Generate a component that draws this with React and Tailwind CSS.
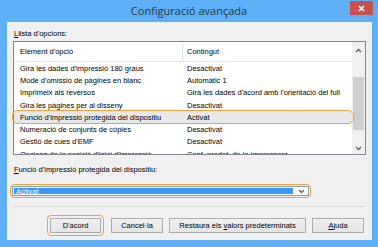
import React from 'react';

const rows = [
  ["Gira les dades d'impressió 180 graus", 'Desactivat'],
  ["Mode d'omissió de pàgines en blanc", 'Automàtic 1'],
  ['Imprimeix als reversos', "Gira les dades d'acord amb l'orientació del full"],
  ['Gira les pàgines per al disseny', 'Desactivat'],
  ["Funció d'impressió protegida del dispositiu", 'Activat', true],
  ['Numeració de conjunts de còpies', 'Desactivat'],
  ["Gestió de cues d'EMF", 'Desactivat'],
  ["Opcions de la posició d'inici d'impressió", 'Conf. predet. de la impressora'],
];

function Chevron({ up }) {
  return (
    <svg width="7" height="5" viewBox="0 0 7 5">
      <path d={up ? 'M1 4 L3.5 1.5 L6 4' : 'M1 1 L3.5 3.5 L6 1'} fill="none" stroke="#606060" strokeWidth="1.3" />
    </svg>
  );
}

function Button({ children, className = '' }) {
  return (
    <div className={`h-[15px] border border-[#acacac] bg-gradient-to-b from-[#f0f0f0] to-[#e5e5e5] flex items-center justify-center text-[7.5px] ${className}`}>
      <span>{children}</span>
    </div>
  );
}

export default function App() {
  return (
    <div className="w-[378px] h-[247px] bg-[#5db0f6] flex flex-col text-black" style={{ fontFamily: '"Liberation Sans", Arial, sans-serif' }}>
      {/* Title bar */}
      <div className="h-[22px] grid grid-cols-[1fr_auto_1fr] items-start">
        <div />
        <div className="pt-[4px] text-[11px] leading-[14px] text-[#2a3440]" style={{ fontFamily: '"Open Sans", sans-serif' }}>Configuració avançada</div>
        <div className="flex justify-end pr-[5px] pt-[1px]">
          <div className="w-[23px] h-[14px] bg-[#c75050] flex items-center justify-center">
            <svg width="7" height="7" viewBox="0 0 7 7">
              <path d="M1 1 L6 6 M6 1 L1 6" stroke="#fff" strokeWidth="1.6" />
            </svg>
          </div>
        </div>
      </div>

      {/* Client area */}
      <div className="mx-[7px] mr-[6px] h-[218px] bg-[#f0f0f0] flex flex-col px-[6px] text-[7.5px]">
        <div className="h-[19px] pt-[7px] pl-[1px] leading-[9px]">
          <span className="underline">L</span>lista d'opcions:
        </div>

        {/* List box */}
        <div className="h-[114px] border border-[#828790] bg-white flex">
          <div className="flex-1 flex flex-col overflow-x-visible overflow-y-clip">
            <div className="h-[20px] shrink-0 flex items-center border-b border-[#e5e5e5] leading-[9px]">
              <div className="w-[169px] h-full flex items-center pl-[6px] border-r border-[#e5e5e5]">Element d'opció</div>
              <div className="pl-[4px]">Contingut</div>
            </div>
            {rows.map(([a, b, sel]) => (
              <div key={a} className={`relative h-[12.3px] shrink-0 flex items-center leading-[9px] whitespace-nowrap ${sel ? 'bg-[#e8e8e8]' : ''}`}>
                {sel && <div className="absolute -left-[2px] -right-[2px] -top-[1px] -bottom-[1px] border-[1.5px] border-[#f5a03c] rounded-[6px]" />}
                <div className="w-[169px] pl-[6px] overflow-hidden">{a}</div>
                <div className="pl-[4px] overflow-hidden">{b}</div>
              </div>
            ))}
          </div>
          {/* Scrollbar */}
          <div className="w-[13px] bg-[#f0f0f0] flex flex-col items-center">
            <div className="h-[17px] w-full flex items-center justify-center pt-[2px]"><Chevron up /></div>
            <div className="flex-1 w-full pt-[21px] pb-[12px] px-[1px]">
              <div className="h-[53px] bg-[#cdcdcd]" />
            </div>
            <div className="h-[15px] w-full flex items-center justify-center"><Chevron /></div>
          </div>
        </div>

        <div className="h-[26px] pt-[10px] pl-[1px] leading-[9px]">
          <span className="underline">F</span>unció d'impressió protegida del dispositiu:
        </div>

        {/* Dropdown */}
        <div className="w-[301px] h-[14px] -ml-[3px] mt-[3px] border-[1.5px] border-[#f5a03c] rounded-[4px] p-[1px]">
          <div className="h-full border border-[#7a9ebf] bg-white flex items-stretch">
            <div className="flex-1 bg-[#3b97ec] m-[1px] text-white flex items-center pl-[2px] leading-[9px]">Activat</div>
            <div className="w-[14px] flex items-center justify-center"><Chevron /></div>
          </div>
        </div>

        <div className="mt-[8px] mr-[1px] h-[2px] border-t border-[#dcdcdc] border-b-white" />

        {/* Buttons */}
        <div className="mt-[7px] flex justify-end items-center gap-[6px] pr-[2px]">
          <div className="border-[1.5px] border-[#f5a03c] rounded-[4px] p-[2px] mr-[1px]">
            <Button className="w-[51px] border-[#3c7fb1]">D'acord</Button>
          </div>
          <Button className="w-[52px]">Cancel·la</Button>
          <Button className="w-[137px]">Restaura els <span className="underline">v</span>alors predeterminats</Button>
          <Button className="w-[52px]"><span className="underline">A</span>juda</Button>
        </div>
      </div>
    </div>
  );
}
